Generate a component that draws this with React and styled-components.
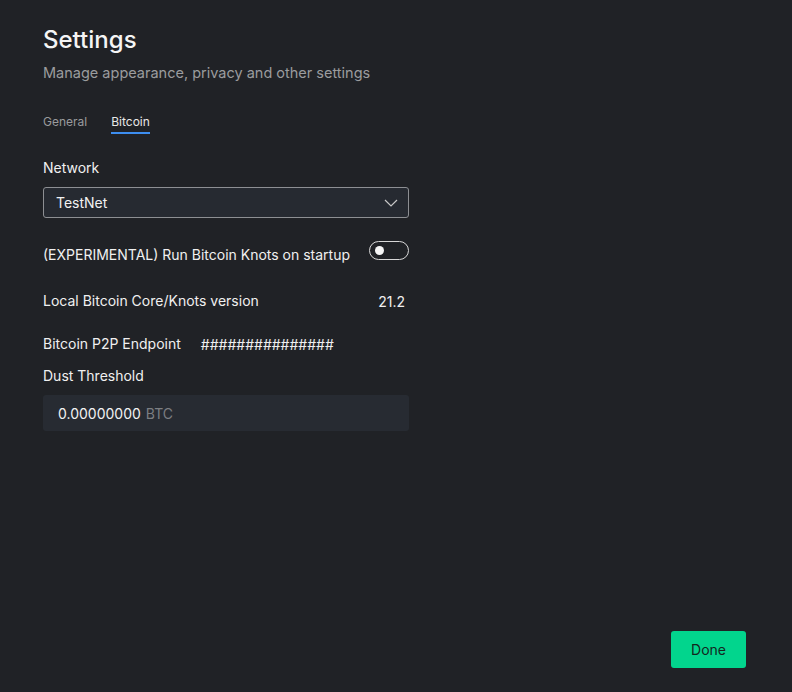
import styled, { createGlobalStyle } from 'styled-components'

const Global = createGlobalStyle`
  html, body {
    margin: 0;
    padding: 0;
    background: #202226;
  }
  body {
    font-family: Inter, "Noto Sans", sans-serif;
    color: #f2f2f2;
  }
`

const Page = styled.div`
  width: 792px;
  height: 692px;
  box-sizing: border-box;
  padding: 24px 0 0 43px;
  display: flex;
  flex-direction: column;
  position: relative;
`

const Title = styled.h1`
  margin: 0;
  font-size: 24px;
  font-weight: 500;
  line-height: 32px;
  color: #f5f5f5;
`

const Subtitle = styled.p`
  margin: 8px 0 0;
  font-size: 14.5px;
  color: #9b9c9e;
  line-height: 18px;
`

const Tabs = styled.div`
  display: flex;
  gap: 24px;
  margin-top: 32px;
`

const Tab = styled.div`
  font-size: 12px;
  line-height: 16px;
  padding-bottom: 2px;
  color: ${p => (p.active ? '#e8e8e8' : '#9a9b9d')};
  border-bottom: 2px solid ${p => (p.active ? '#3d8ef0' : 'transparent')};
`

const Content = styled.div`
  width: 366px;
  display: flex;
  flex-direction: column;
  margin-top: 25px;
`

const Label = styled.div`
  font-size: 14px;
  line-height: 18px;
  color: #f0f0f0;
  font-weight: 400;
`

const Select = styled.div`
  margin-top: 10px;
  height: 31px;
  box-sizing: border-box;
  border: 1px solid #8d8f93;
  border-radius: 3px;
  background: #262a31;
  display: flex;
  align-items: center;
  justify-content: space-between;
  padding: 0 10px 0 12px;
  font-size: 14px;
  color: #f2f2f2;
`

const Row = styled.div`
  display: flex;
  align-items: center;
  justify-content: ${p => p.justify || 'space-between'};
  gap: ${p => p.gap || '0'};
  margin-top: ${p => p.top || '0'};
  padding-right: ${p => p.right || '0'};
`

const Toggle = styled.div`
  width: 40px;
  height: 19px;
  box-sizing: border-box;
  border: 1.5px solid #d8d8d8;
  border-radius: 10px;
  position: relative;
  align-self: flex-start;
  margin-top: -5px;

  &::after {
    content: '';
    position: absolute;
    left: 5px;
    top: 3.5px;
    width: 9px;
    height: 9px;
    border-radius: 50%;
    background: #f5f5f5;
  }
`

const Value = styled.span`
  font-size: 14px;
  color: #f0f0f0;
`

const Input = styled.div`
  margin-top: 10px;
  height: 36px;
  border-radius: 3px;
  background: #272b32;
  display: flex;
  align-items: center;
  gap: 5px;
  padding-left: 15px;
  font-size: 14px;
`

const Unit = styled.span`
  color: #7c7e82;
`

const Done = styled.button`
  position: absolute;
  right: 46px;
  bottom: 24px;
  width: 75px;
  height: 37px;
  border: none;
  border-radius: 3px;
  background: #02d58d;
  color: #14261e;
  font-family: Inter, "Noto Sans", sans-serif;
  font-size: 14px;
`

const Chevron = () => (
  <svg width="14" height="8" viewBox="0 0 14 8" fill="none">
    <path d="M1 1l6 6 6-6" stroke="#c8c8c8" strokeWidth="1.2" />
  </svg>
)

export default function App() {
  return (
    <>
      <Global />
      <Page>
        <Title>Settings</Title>
        <Subtitle>Manage appearance, privacy and other settings</Subtitle>
        <Tabs>
          <Tab>General</Tab>
          <Tab active>Bitcoin</Tab>
        </Tabs>
        <Content>
          <Label>Network</Label>
          <Select>
            TestNet
            <Chevron />
          </Select>
          <Row top="28px">
            <Label>(EXPERIMENTAL) Run Bitcoin Knots on startup</Label>
            <Toggle />
          </Row>
          <Row top="28px" right="4px">
            <Label>Local Bitcoin Core/Knots version</Label>
            <Value>21.2</Value>
          </Row>
          <Row top="25px" justify="flex-start" gap="20px">
            <Label>Bitcoin P2P Endpoint</Label>
            <Value>###############</Value>
          </Row>
          <Row top="14px">
            <Label>Dust Threshold</Label>
          </Row>
          <Input>
            0.00000000 <Unit>BTC</Unit>
          </Input>
        </Content>
        <Done>Done</Done>
      </Page>
    </>
  )
}
